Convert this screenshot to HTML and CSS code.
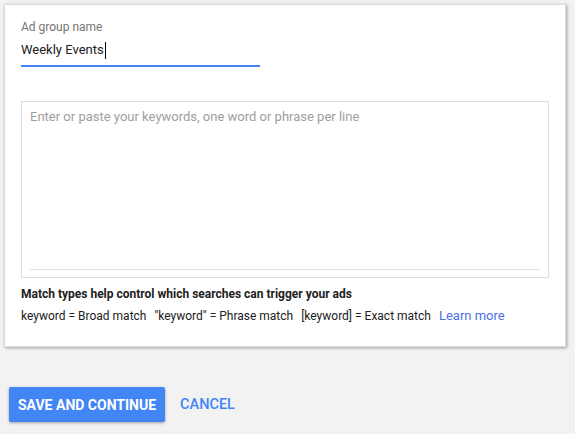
FILE: index.html
```html
<!DOCTYPE html>
<html>
<head>
<meta charset="utf-8">
<link rel="stylesheet" href="styles.css">
</head>
<body>
<div class="card">
  <div class="field-label">Ad group name</div>
  <div class="name-input"><span class="name-value">Weekly Events</span><span class="caret"></span></div>
  <div class="keywords">
    <div class="placeholder">Enter or paste your keywords, one word or phrase per line</div>
    <div class="keywords-line"></div>
  </div>
  <div class="match-title">Match types help control which searches can trigger your ads</div>
  <div class="match-row">
    <span class="match-item">keyword = Broad match</span>
    <span class="match-item">"keyword" = Phrase match</span>
    <span class="match-item">[keyword] = Exact match</span>
    <a class="learn-more" href="#">Learn more</a>
  </div>
</div>
<div class="actions">
  <button class="btn-primary">SAVE AND CONTINUE</button>
  <button class="btn-text">CANCEL</button>
</div>
</body>
</html>
```
FILE: styles.css
```css
html, body {
  margin: 0;
  padding: 0;
}
body {
  background: #f2f2f2;
  font-family: Roboto, "Liberation Sans", Arial, sans-serif;
  color: #212121;
  width: 575px;
  height: 434px;
  overflow: hidden;
}
.card {
  box-sizing: border-box;
  margin: 4px 0 0 4px;
  width: 562px;
  height: 343px;
  background: #fff;
  border: 1px solid #dcdcdc;
  box-shadow: 1px 1px 3px rgba(0, 0, 0, 0.35);
  padding: 14px 16px 0 16px;
}
.field-label {
  font-size: 12px;
  line-height: 16px;
  color: #757575;
}
.name-input {
  margin-top: 5px;
  width: 239px;
  font-size: 13px;
  line-height: 20px;
  padding-bottom: 5px;
  border-bottom: 2px solid #4285f4;
  display: flex;
  align-items: center;
}
.caret {
  display: inline-block;
  width: 1px;
  height: 17px;
  background: #000;
  margin-left: 1px;
}
.keywords {
  box-sizing: border-box;
  margin-top: 34px;
  width: 528px;
  height: 177px;
  border: 1px solid #dedede;
  padding: 7px 8px 7px 8px;
  display: flex;
  flex-direction: column;
}
.placeholder {
  font-size: 13px;
  line-height: 16px;
  color: #9e9e9e;
}
.keywords-line {
  margin-top: auto;
  height: 1px;
  background: #e0e0e0;
}
.match-title {
  margin-top: 8px;
  font-size: 12px;
  line-height: 16px;
  font-weight: 700;
  color: #212121;
}
.match-row {
  margin-top: 6px;
  font-size: 12px;
  line-height: 16px;
  color: #212121;
  display: flex;
  align-items: baseline;
}
.match-item {
  margin-right: 8px;
}
.learn-more {
  font-size: 13px;
  color: #4a6fe0;
  text-decoration: none;
}
.actions {
  margin: 40px 0 0 9px;
  display: flex;
  align-items: center;
}
.btn-primary {
  height: 35px;
  padding: 0 9px;
  border: none;
  border-radius: 2px;
  background: #4285f4;
  color: #fff;
  font-family: Roboto, "Liberation Sans", Arial, sans-serif;
  font-size: 14px;
  font-weight: 700;
  box-shadow: 0 1px 3px rgba(0, 0, 0, 0.35);
}
.btn-text {
  margin-left: 7px;
  padding: 0 8px;
  height: 35px;
  border: none;
  background: transparent;
  color: #4285f4;
  font-family: Roboto, "Liberation Sans", Arial, sans-serif;
  font-size: 14.5px;
  font-weight: 500;
}
```
